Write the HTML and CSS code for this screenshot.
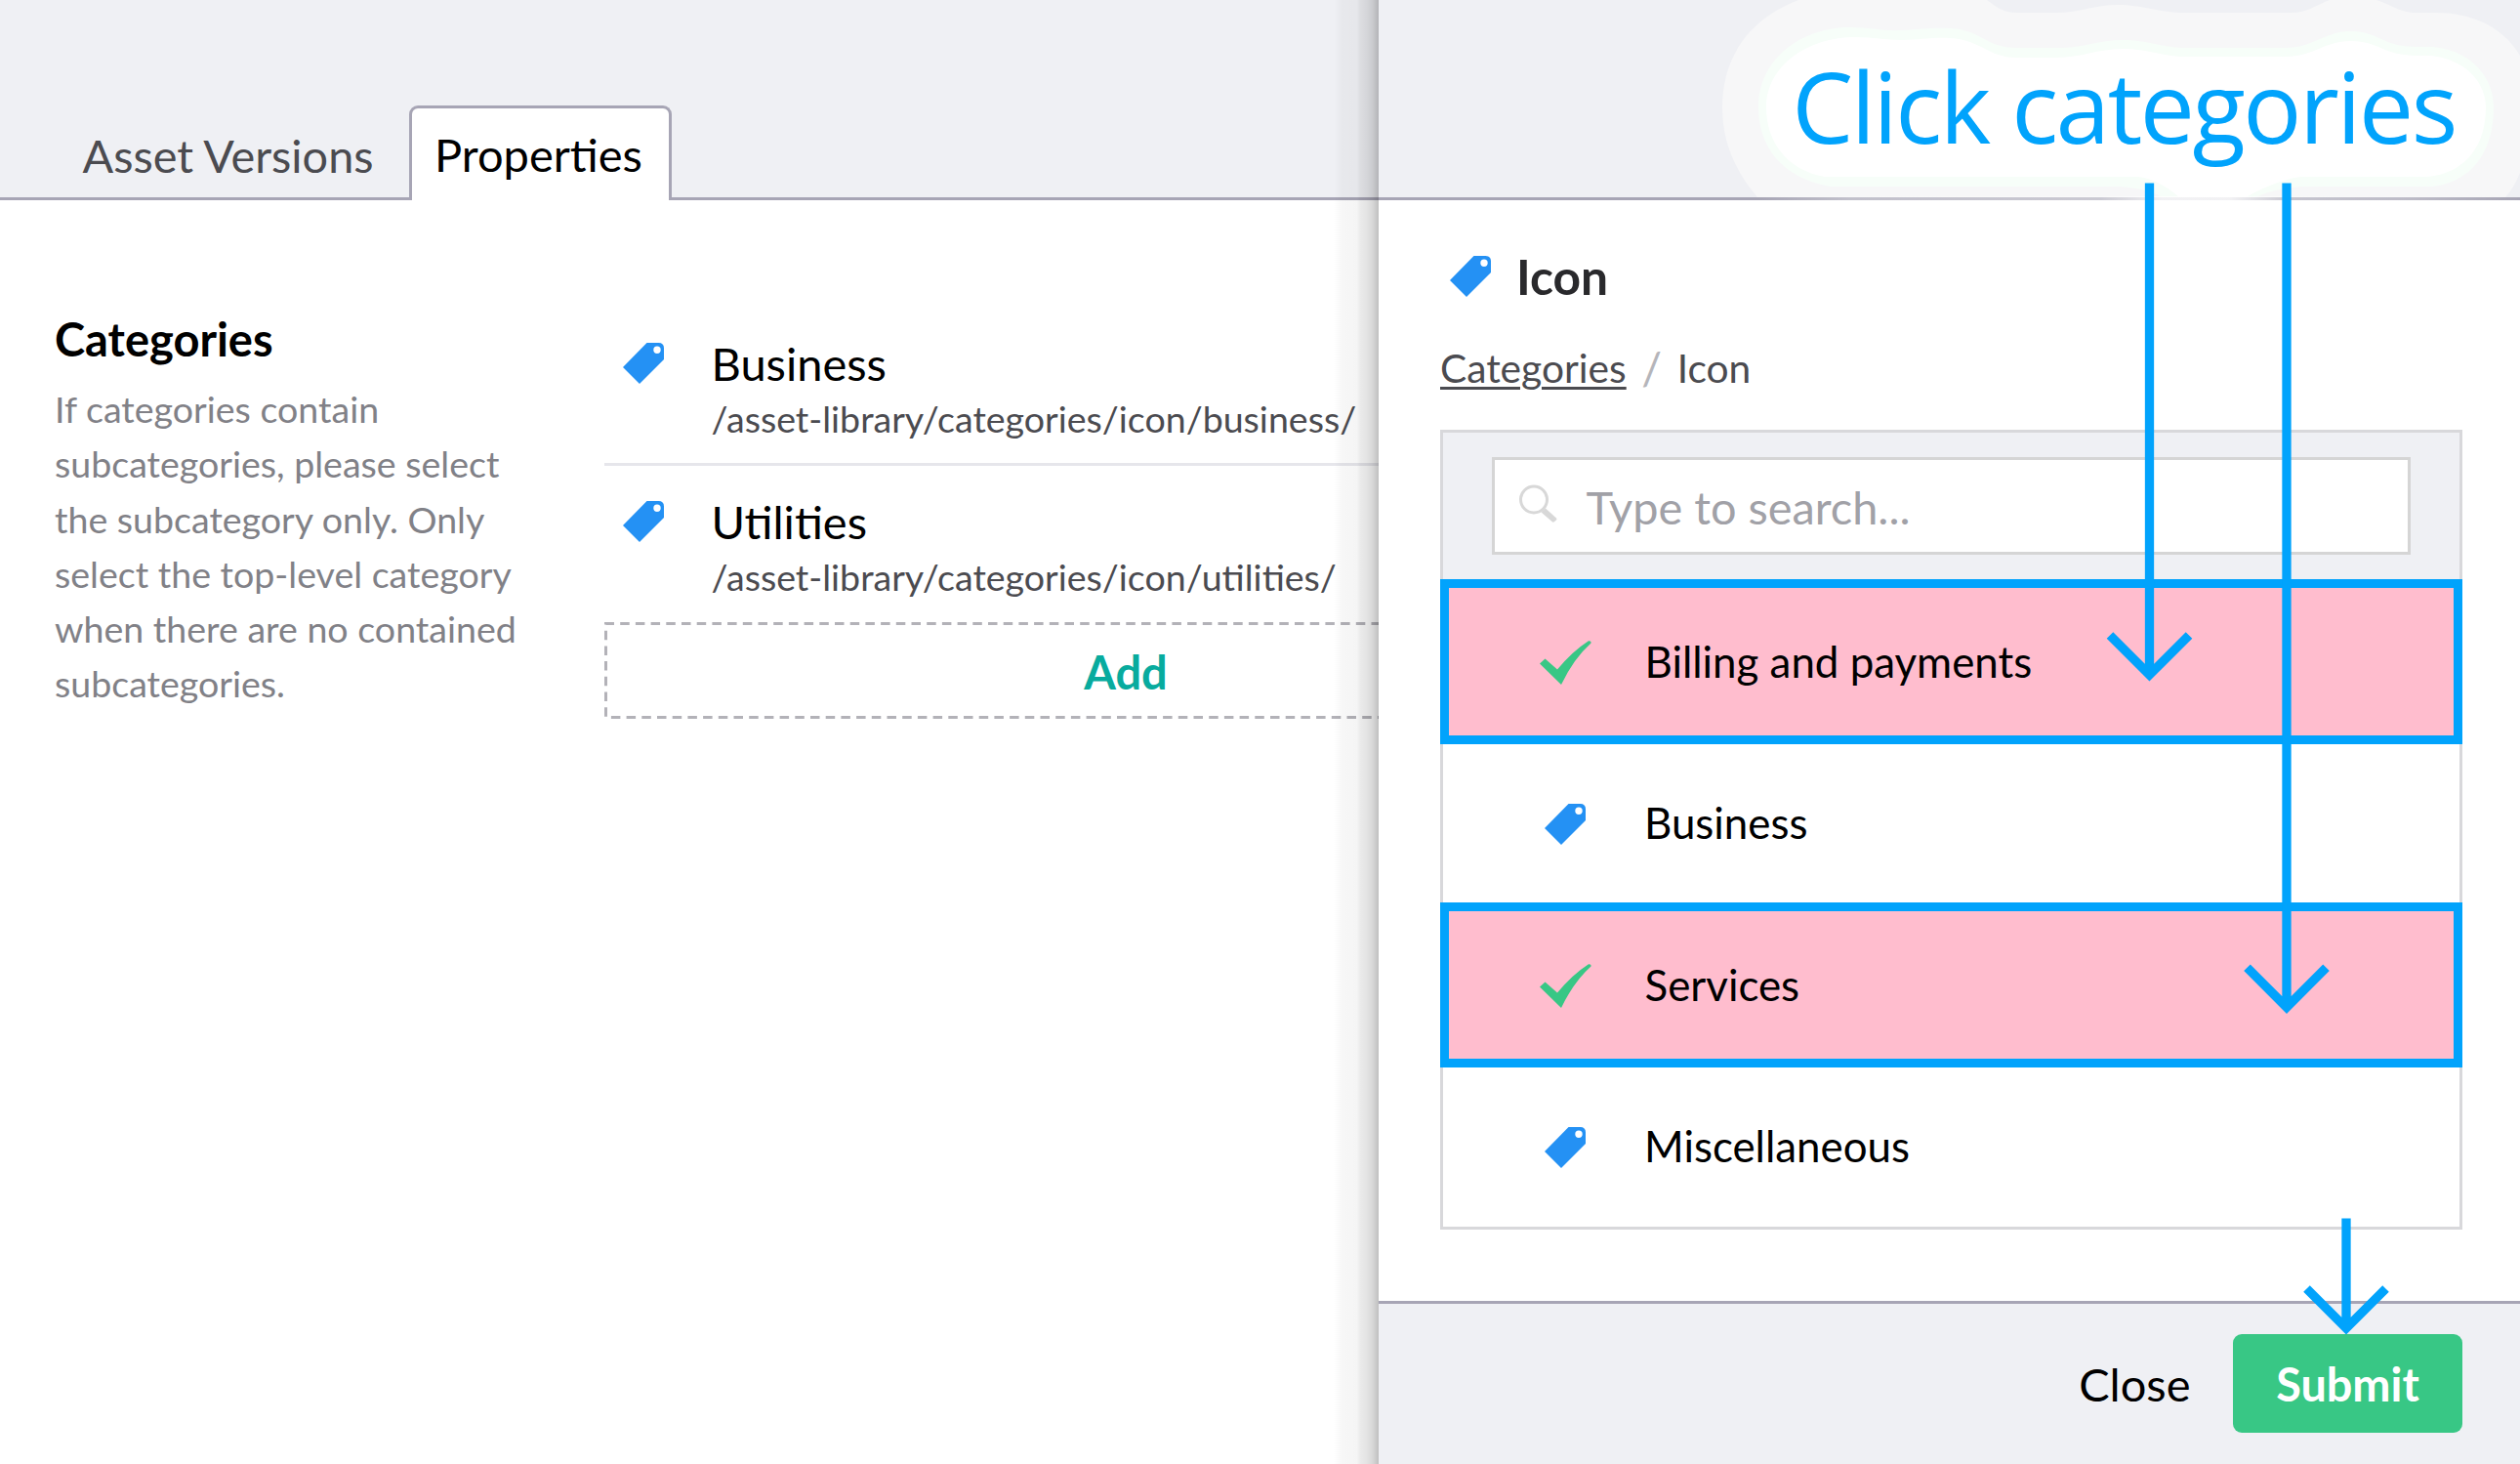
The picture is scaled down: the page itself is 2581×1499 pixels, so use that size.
FILE: index.html
```
<!DOCTYPE html>
<html lang="en">
<head>
<meta charset="utf-8">
<title>Asset properties</title>
<link rel="stylesheet" href="styles.css">
</head>
<body>
<svg class="defs" aria-hidden="true">
  <symbol id="tag" viewBox="0 0 42 42"><path fill-rule="evenodd" d="M24.500 0H36.500Q42 0 42 5.500V17L17 42L0 25ZM35 3.500A3.700 3.700 0 1 0 35 10.900A3.700 3.700 0 1 0 35 3.500Z"/></symbol>
  <symbol id="check" viewBox="0 0 53 45"><path d="M0 23.500L5.500 18.500L18 29.500Q34 10.500 50 .3Q53 -.2 52.500 2.500Q35 18 22 45Z"/></symbol>
  <symbol id="search" viewBox="0 0 39 39"><circle cx="15" cy="15.500" r="13.500" fill="none" stroke="currentColor" stroke-width="3"/><path d="M22.500 28.500L27 24.500L38 34.500Q39 35.500 38 36.500L35.500 38.500Q34.500 39 33.500 38Z"/></symbol>
</svg>
<div class="app">
  <main class="page">
    <nav class="tabs">
      <a class="tab">Asset Versions</a>
      <a class="tab tab-active">Properties</a>
    </nav>
    <section class="property">
      <div class="property-label">
        <h2>Categories</h2>
        <p>If categories contain<br>subcategories, please select<br>the subcategory only. Only<br>select the top-level category<br>when there are no contained<br>subcategories.</p>
      </div>
      <div class="property-value">
        <div class="node">
          <svg class="tag-icon"><use href="#tag"/></svg>
          <div><div class="node-name">Business</div><div class="node-path">/asset-library/categories/icon/business/</div></div>
        </div>
        <div class="node">
          <svg class="tag-icon"><use href="#tag"/></svg>
          <div><div class="node-name">Utilities</div><div class="node-path">/asset-library/categories/icon/utilities/</div></div>
        </div>
        <div class="add">
          <svg class="add-frame"><path d="M795 1.500H1.500V97.500H795"/></svg>
          <span>Add</span>
        </div>
      </div>
    </section>
    <div class="panel-shadow"></div>
  </main>
  <aside class="panel">
    <header class="panel-header"></header>
    <div class="panel-body">
      <h1 class="panel-title"><svg class="tag-icon"><use href="#tag"/></svg>Icon</h1>
      <div class="crumbs"><a>Categories</a><i>/</i><span>Icon</span></div>
      <div class="tree">
        <div class="filter"><label class="search"><svg class="search-icon"><use href="#search"/></svg>Type to search...</label></div>
        <div class="row row-picked"><svg class="check-icon"><use href="#check"/></svg>Billing and payments</div>
        <div class="row"><svg class="tag-icon"><use href="#tag"/></svg>Business</div>
        <div class="row row-picked"><svg class="check-icon"><use href="#check"/></svg>Services</div>
        <div class="row"><svg class="tag-icon"><use href="#tag"/></svg>Miscellaneous</div>
      </div>
    </div>
    <footer class="panel-footer"><a class="close">Close</a><a class="submit">Submit</a></footer>
  </aside>
  <svg class="callout" viewBox="0 0 2581 1499">
    <defs>
      <linearGradient id="fade"><stop offset="0" stop-color="#fff" stop-opacity="0"/><stop offset=".12" stop-color="#fff" stop-opacity=".3"/><stop offset=".45" stop-color="#fff" stop-opacity=".4"/><stop offset=".53" stop-color="#fff" stop-opacity=".85"/><stop offset=".62" stop-color="#fff" stop-opacity=".85"/><stop offset=".7" stop-color="#fff" stop-opacity=".35"/><stop offset=".85" stop-color="#fff" stop-opacity=".25"/><stop offset="1" stop-color="#fff" stop-opacity="0"/></linearGradient>
    </defs>
    <path class="halo-outer" d="M1800 202C1777 175 1764 145 1764 110C1764 60 1790 20 1842 0H2035C2046 8 2052 13 2066 13H2106C2130 13 2145 5 2169 5C2195 5 2210 13 2239 13H2346C2364 13 2372 5 2386 0H2434C2452 6 2458 13 2475 13H2495C2535 13 2565 30 2581 57V177Q2575 192 2566 202Z"/>
    <path class="halo-mid" d="M1874 191C1825 182 1801 150 1801 110C1801 60 1845 28 1895 28C1915 28 1928 32 1948 31C1968 30 1978 28 1997 29C2032 31 2032 49 2066 49H2106C2132 50 2148 41 2174 41C2200 41 2215 49 2239 49H2341C2370 49 2380 32 2408 32C2436 32 2440 48 2475 48H2492C2532 52 2554 80 2554 110C2554 155 2532 186 2491 191H2357Q2330 193 2310 202H2214Q2200 193 2170 191Z"/>
    <path class="halo-inner" d="M1869 181C1830 174 1809 145 1809 110C1809 68 1850 38 1901 38C1918 38 1930 41 1948 41C1968 41 1978 38 1997 39C2030 41 2036 59 2066 59H2106C2132 59 2148 50 2174 50C2200 50 2215 58 2239 58H2341C2370 58 2380 42 2408 42C2436 42 2442 57 2475 57H2490C2525 61 2546 84 2546 110C2546 150 2524 178 2485 181H2357Q2335 183 2300 202H2232Q2210 183 2190 181Z"/>
    <rect x="1800" y="201" width="781" height="5" fill="url(#fade)"/>
    <text class="callout-text" x="1835.300" y="146.600">Click categories</text>
    <g class="arrow">
      <path d="M2201.500 187.500V689M2161 650.500L2201.500 691L2242 650.500"/>
      <path d="M2342 187.500V1029M2301.500 990.800L2342 1031.300L2382.500 990.800"/>
      <path d="M2403 1247.500V1358M2362.500 1319.500L2403 1360L2443.500 1319.500"/>
    </g>
  </svg>
</div>
</body>
</html>
```
FILE: styles.css
```
* { box-sizing: border-box; }
body { margin: 0; background: #fff; color: #000; font-family: Lato, "Open Sans", sans-serif; font-size: 47px; }
h1, h2, p { margin: 0; }
svg { display: block; flex: none; fill: currentColor; }
.defs { position: absolute; width: 0; height: 0; }
.app { position: relative; display: flex; width: 2581px; height: 1499px; overflow: hidden; }

.page { position: relative; width: 1412px; overflow: hidden; }
.tabs { display: flex; align-items: flex-end; height: 205px; padding-left: 57px; background: linear-gradient(#a7a5b5, #a7a5b5) 0 100% / 100% 3px no-repeat #eff0f4; }
.tab { width: 362px; height: 97px; padding: 3px 0 0 27.500px; font-size: 46.800px; line-height: 96px; color: #4b4b50; white-space: nowrap; }
.tab-active { width: 269px; border: 3px solid #a7a5b5; border-bottom: 0; border-radius: 9px 9px 0 0; background: #fff; color: #000; padding: 0 0 0 23px; font-size: 47px; line-height: 95px; }

.property { display: flex; padding: 114px 0 0 56px; }
.property-label { flex: none; width: 563px; }
.property-label h2 { font-size: 47px; line-height: 56px; }
.property-label p { margin-top: 16px; font-size: 37.550px; line-height: 56.300px; color: #818187; }
.property-value { flex: none; width: 1068px; margin-top: -1px; }
.node { display: flex; height: 159px; padding: 25px 0 0 18.500px; border-bottom: 3px solid #e6e6eb; }
.node + .node { height: 159.500px; padding-top: 28px; border-bottom: 0; }
.tag-icon { width: 42px; height: 42px; color: #2491f4; }
.node .tag-icon { margin: 7.500px 49px 0 0; }
.node-name { font-size: 47px; line-height: 58px; white-space: nowrap; }
.node-path { font-size: 37.550px; line-height: 55px; color: #4b4b50; white-space: nowrap; }
.add { display: flex; position: relative; height: 99px; justify-content: center; color: #08ab9e; font-weight: 700; line-height: 102px; }
.add-frame { position: absolute; left: 0; top: 0; width: 795px; height: 99px; fill: none; stroke: #b3b2b8; stroke-width: 3px; stroke-dasharray: 9.500 6.200; }
.panel-shadow { position: absolute; right: 0; top: 0; width: 46px; height: 100%; background: linear-gradient(90deg, #0000 0, #00000008 8px, #0000000a 24px, #00000014 27px, #0000001c 34px, #00000028 40px, #00000040 46px); }

.panel { display: flex; flex-direction: column; flex: 1; background: #fff; }
.panel-header { height: 205px; background: #eff0f4; border-bottom: 3px solid #a7a5b5; }
.panel-body { flex: 1; padding: 47.500px 59px 0 63px; }
.panel-title { display: flex; height: 60px; padding-left: 10px; gap: 26px; font-size: 49.700px; line-height: 60px; color: #29292c; }
.panel-title .tag-icon { margin-top: 9.500px; }
.crumbs { display: flex; margin-top: 39.500px; height: 50px; font-size: 40.700px; line-height: 50px; color: #4b4b50; }
.crumbs a { text-decoration: underline; text-decoration-thickness: 3px; text-underline-offset: 4px; }
.crumbs i { width: 52px; text-align: center; color: #b5b5ba; font-style: normal; font-size: 46px; }
.tree { height: 819px; margin-top: 37.500px; border: 3px solid #d8d8db; }
.filter { height: 150.500px; padding: 25px 50px 0; background: #eff0f4; }
.search { display: flex; height: 100px; border: 3px solid #d5d5d5; background: #fff; padding-left: 24.500px; gap: 30px; color: #a1a1a7; font-size: 46.850px; line-height: 97px; }
.search-icon { width: 39px; height: 39px; margin-top: 25px; color: #d8d8d8; }
.row { display: flex; height: 162px; padding: 0 0 2px 104px; align-items: center; gap: 60px; font-size: 43.850px; line-height: 54px; }
.row .tag-icon, .row .check-icon { margin-top: 3px; }
.row-picked { height: 169px; margin: 0 -3px; border: 9px solid #01a3fc; background: #ffbdce; padding: 0 0 1px 93px; gap: 54.500px; }
.check-icon { width: 53px; height: 45px; color: #38c785; }
.panel-footer { display: flex; justify-content: flex-end; height: 167px; border-top: 3px solid #a7a5b5; background: #eff0f4; padding: 31px 59px 0 0; }
.close { line-height: 103px; margin-right: 43.500px; }
.submit { width: 235px; height: 101px; border-radius: 9px; background: #38c785; color: #fff; font-size: 46.800px; font-weight: 700; text-align: center; line-height: 103px; }

.callout { position: absolute; left: 0; top: 0; width: 2581px; height: 1499px; }
.callout-text { font-family: "Open Sans", sans-serif; font-size: 100px; letter-spacing: -2.500px; fill: #01a3fc; }
.halo-outer { fill: #f7f7f8; }
.halo-mid { fill: #f7fef9; }
.halo-inner { fill: #fff; }
.arrow { fill: none; stroke: #01a3fc; stroke-width: 9.300px; }
```
